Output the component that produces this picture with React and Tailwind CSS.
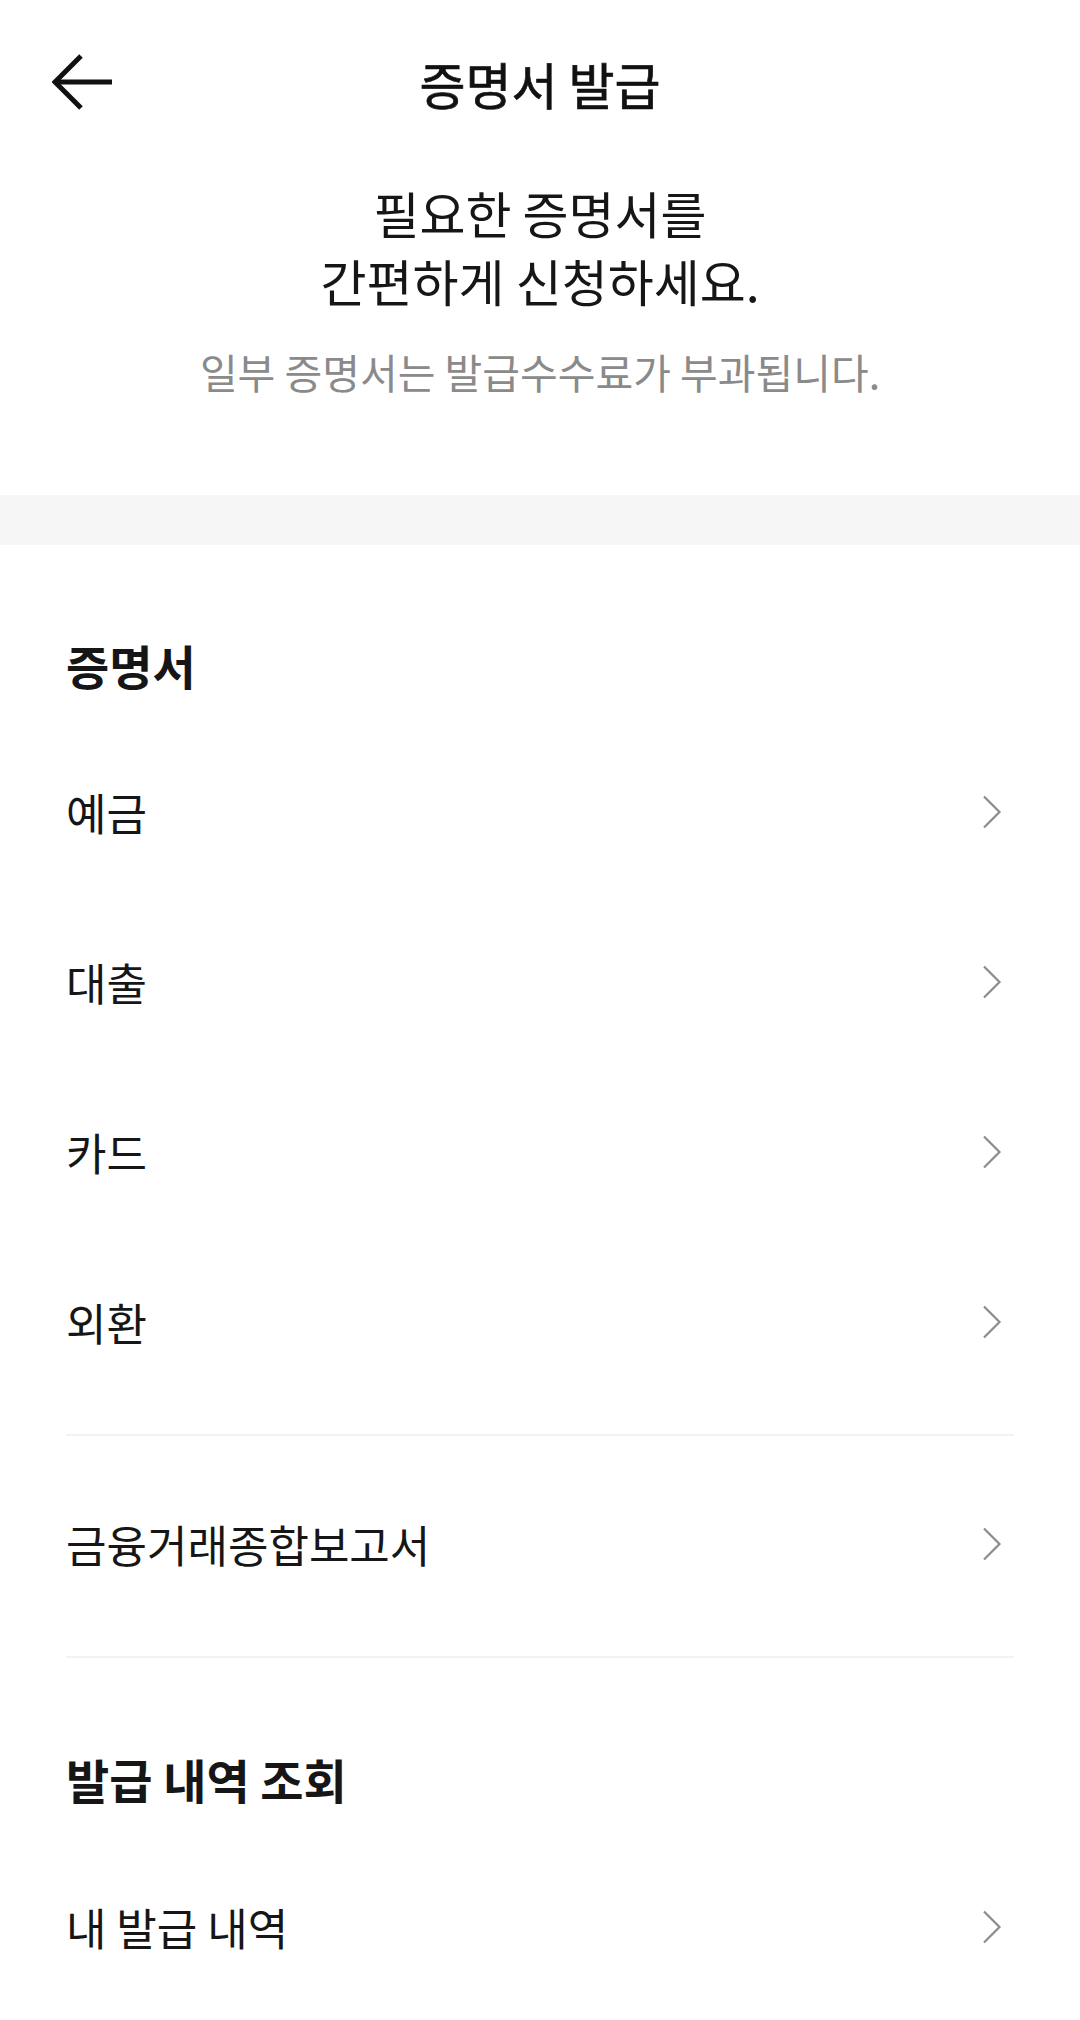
import React from 'react';

const certItems = ['예금', '대출', '카드', '외환'];

const Chevron = () => (
  <svg width="20" height="34" viewBox="0 0 20 34" fill="none" className="mr-[12px]">
    <path d="M2 1.5 L17.5 17 L2 32.5" stroke="#8c8c8c" strokeWidth="2.2" />
  </svg>
);

const Row = ({ label }) => (
  <div className="flex h-[170px] items-center justify-between">
    <span className="text-[44px] leading-none text-[#161616]">{label}</span>
    <Chevron />
  </div>
);

const App = () => {
  return (
    <div className="min-h-[2020px] w-[1080px] bg-white font-['Noto_Sans_CJK_KR','Noto_Sans_CJK_SC',sans-serif] text-[#111]">
      {/* Header */}
      <header className="grid h-[174px] grid-cols-[1fr_auto_1fr] items-center">
        <div className="pl-[52px]">
          <svg width="60" height="56" viewBox="0 0 60 56" fill="none" className="mt-[-10px]">
            <path d="M29 2 L3 28 L29 54" stroke="#111" strokeWidth="5" />
            <path d="M4 28 H60" stroke="#111" strokeWidth="5" />
          </svg>
        </div>
        <h1 className="mb-[8px] text-[50px] font-normal leading-none [-webkit-text-stroke:0.7px_#111]">
          증명서 발급
        </h1>
        <div />
      </header>

      {/* Intro */}
      <section className="pt-[4px] pb-[100px] text-center">
        <p className="text-[50px] leading-[68px] text-[#161616]">
          필요한 증명서를
          <br />
          간편하게 신청하세요.
        </p>
        <p className="mt-[33px] text-[41px] leading-[48px] text-[#8a8a8a]">
          일부 증명서는 발급수수료가 부과됩니다.
        </p>
      </section>

      <div className="h-[50px] bg-[#f6f6f6]" />

      {/* Certificate list */}
      <section className="px-[66px] pt-[90px]">
        <h2 className="h-[60px] text-[47px] font-bold leading-[60px] text-[#161616]">증명서</h2>
        <div className="mt-[32px]">
          {certItems.map((item) => (
            <Row key={item} label={item} />
          ))}
        </div>
        <div className="mt-[27px] h-[2px] bg-[#f2f2f2]" />
        <div className="mt-[23px]">
          <Row label="금융거래종합보고서" />
        </div>
        <div className="mt-[27px] h-[2px] bg-[#f2f2f2]" />

        <h2 className="mt-[91px] h-[60px] text-[47px] font-bold leading-[60px] text-[#161616]">
          발급 내역 조회
        </h2>
        <div className="mt-[33px]">
          <Row label="내 발급 내역" />
        </div>
      </section>
    </div>
  );
};

export default App;
